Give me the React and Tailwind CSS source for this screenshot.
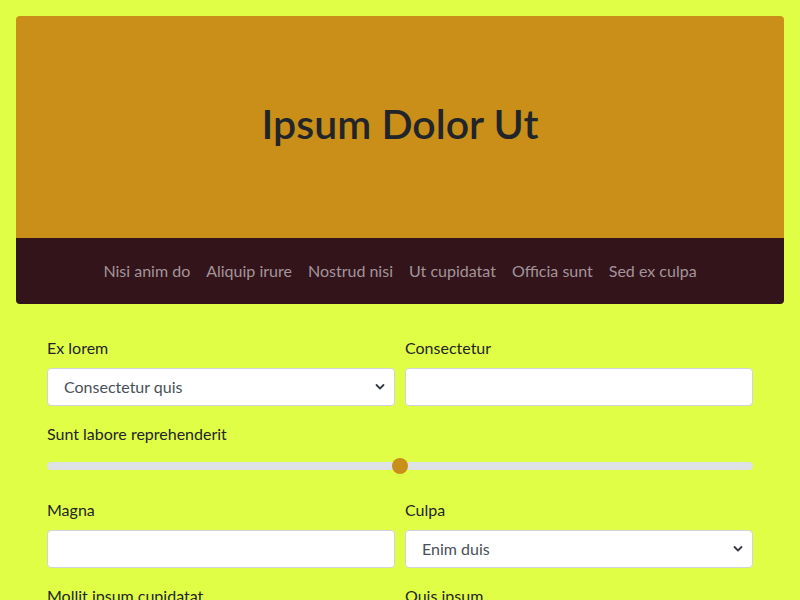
import React from 'react';

const navLinks = ['Nisi anim do', 'Aliquip irure', 'Nostrud nisi', 'Ut cupidatat', 'Officia sunt', 'Sed ex culpa'];

const Chevron = () => (
  <svg
    className="pointer-events-none absolute right-[10px] top-1/2 -translate-y-1/2"
    width="10"
    height="7"
    viewBox="0 0 10 7"
    fill="none"
  >
    <path d="M1.5 1.5 5 5l3.5-3.5" stroke="#343a40" strokeWidth="1.8" strokeLinecap="round" strokeLinejoin="round" />
  </svg>
);

const Field = ({ label, children }) => (
  <div className="flex flex-col">
    <label className="mb-2 leading-6 text-[#212529]">{label}</label>
    {children}
  </div>
);

const TextInput = () => (
  <input
    type="text"
    className="h-[38px] w-full rounded-[4px] border border-[#ced4da] bg-white px-3 text-[#212529] outline-none"
  />
);

const Select = ({ value }) => (
  <div className="relative">
    <div className="flex h-[38px] w-full items-center rounded-[4px] border border-[#ced4da] bg-white pl-4 text-[#495057]">
      {value}
    </div>
    <Chevron />
  </div>
);

export default function App() {
  return (
    <div
      className="min-h-[600px] bg-[#e1fe47] p-4 text-base"
      style={{ fontFamily: 'Lato, "Open Sans", sans-serif' }}
    >
      {/* Header */}
      <div className="flex h-[222px] items-center justify-center rounded-t-[4px] bg-[#c98f18]">
        <h1 className="mb-[6px] text-[41px] font-semibold leading-tight text-[#212529]">Ipsum Dolor Ut</h1>
      </div>

      {/* Nav */}
      <div className="flex h-[66px] items-center justify-center rounded-b-[4px] bg-[#33141b]">
        {navLinks.map((l) => (
          <span key={l} className="px-2 text-[#a3949a]">
            {l}
          </span>
        ))}
      </div>

      {/* Form */}
      <div className="px-[31px] pt-8">
        <div className="grid grid-cols-2 gap-x-[10px]">
          <Field label="Ex lorem">
            <Select value="Consectetur quis" />
          </Field>
          <Field label="Consectetur">
            <TextInput />
          </Field>
        </div>

        <div className="mt-4 flex flex-col">
          <label className="mb-2 leading-6 text-[#212529]">Sunt labore reprehenderit</label>
          <div className="relative flex h-6 items-center">
            <div className="h-2 w-full rounded-full bg-[#dee2e6]" />
            <div className="absolute left-1/2 top-1/2 h-4 w-4 -translate-x-1/2 -translate-y-1/2 rounded-full bg-[#c98f18]" />
          </div>
        </div>

        <div className="mt-5 grid grid-cols-2 gap-x-[10px]">
          <Field label="Magna">
            <TextInput />
          </Field>
          <Field label="Culpa">
            <Select value="Enim duis" />
          </Field>
        </div>

        <div className="mt-4 grid grid-cols-2 gap-x-[10px]">
          <Field label="Mollit ipsum cupidatat">
            <TextInput />
          </Field>
          <Field label="Quis ipsum">
            <TextInput />
          </Field>
        </div>
      </div>
    </div>
  );
}
